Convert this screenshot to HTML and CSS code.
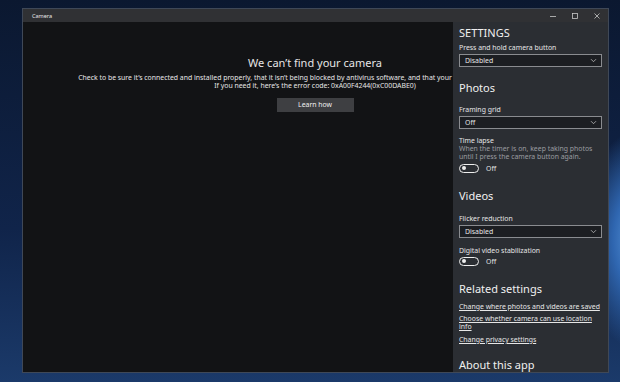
FILE: index.html
```html
<!DOCTYPE html>
<html lang="en">
<head>
    <meta charset="UTF-8">
    <meta name="viewport" content="width=device-width, initial-scale=1.0">
    <title>Camera</title>
    <link rel="stylesheet" href="styles.css">
</head>
<body>
    <div class="desktop">
        <div class="window">
            <div class="titlebar">
                <span class="app-title">Camera</span>
                <div class="controls">
                    <span class="ctl"><svg width="8" height="8" viewBox="0 0 8 8"><path d="M1 4.5h6" stroke="#c8c8c8" stroke-width="0.8"/></svg></span>
                    <span class="ctl"><svg width="8" height="8" viewBox="0 0 8 8"><rect x="1.5" y="1.5" width="5" height="5" fill="none" stroke="#c8c8c8" stroke-width="0.8"/></svg></span>
                    <span class="ctl"><svg width="8" height="8" viewBox="0 0 8 8"><path d="M1.5 1.5l5 5M6.5 1.5l-5 5" stroke="#c8c8c8" stroke-width="0.8"/></svg></span>
                </div>
            </div>
            <div class="content">
                <div class="viewer">
                    <div class="message">
                        <h1>We can’t find your camera</h1>
                        <p>Check to be sure it’s connected and installed properly, that it isn’t being blocked by antivirus software, and that your camera drivers are up-to-date.</p>
                        <p>If you need it, here’s the error code: 0xA00F4244(0xC00DABE0)</p>
                        <button class="learn-btn">Learn how</button>
                    </div>
                </div>

                <div class="settings">
                    <h2 class="top">SETTINGS</h2>
                    <div class="label l-press">Press and hold camera button</div>
                    <div class="dropdown">Disabled<svg class="chev" width="7" height="5" viewBox="0 0 7 5"><path d="M1 1.2l2.5 2.5 2.5-2.5" fill="none" stroke="#bbb" stroke-width="0.8"/></svg></div>

                    <h2 class="h-photos">Photos</h2>
                    <div class="label l-grid">Framing grid</div>
                    <div class="dropdown">Off<svg class="chev" width="7" height="5" viewBox="0 0 7 5"><path d="M1 1.2l2.5 2.5 2.5-2.5" fill="none" stroke="#bbb" stroke-width="0.8"/></svg></div>
                    <div class="label l-lapse">Time lapse</div>
                    <div class="desc">When the timer is on, keep taking photos<br>until I press the camera button again.</div>
                    <div class="toggle-row t-lapse"><span class="toggle"><span class="knob"></span></span>Off</div>

                    <h2 class="h-videos">Videos</h2>
                    <div class="label l-flicker">Flicker reduction</div>
                    <div class="dropdown">Disabled<svg class="chev" width="7" height="5" viewBox="0 0 7 5"><path d="M1 1.2l2.5 2.5 2.5-2.5" fill="none" stroke="#bbb" stroke-width="0.8"/></svg></div>
                    <div class="label l-stab">Digital video stabilization</div>
                    <div class="toggle-row t-stab"><span class="toggle"><span class="knob"></span></span>Off</div>

                    <h2 class="h-related">Related settings</h2>
                    <a class="link l1" href="#">Change where photos and videos are saved</a>
                    <a class="link l2" href="#">Choose whether camera can use location<br>info</a>
                    <a class="link l3" href="#">Change privacy settings</a>

                    <h2 class="h-about">About this app</h2>
                </div>
            </div>
        </div>
    </div>
</body>
</html>
```

FILE: styles.css
```css
html, body {
    margin: 0;
    height: 100%;
}
body {
    font-family: "Noto Sans", "Open Sans", sans-serif;
    background:
        radial-gradient(ellipse 60px 110px at 640px 240px, #5d9be0 0%, #2f66b0 45%, rgba(20, 50, 100, 0) 100%),
        linear-gradient(180deg, #0b1830 0%, #10244a 60%, #1b3a6a 100%);
    overflow: hidden;
}
.desktop {
    width: 620px;
    height: 382px;
    padding: 8px 11px 9px 22px;
    box-sizing: border-box;
}
.window {
    height: 100%;
    display: flex;
    flex-direction: column;
    border: 1px solid #3f4857;
    box-sizing: border-box;
    background: #121315;
}
.titlebar {
    height: 13px;
    background: #303134;
    display: flex;
    align-items: center;
    justify-content: space-between;
    color: #e8e8e8;
    font-size: 5.5px;
    padding-left: 9px;
}
.controls {
    display: flex;
    height: 100%;
}
.ctl {
    width: 22px;
    display: flex;
    align-items: center;
    justify-content: center;
}
.content {
    flex: 1;
    display: flex;
    overflow: hidden;
    background: #121315;
}
/* camera view: clipped where the settings pane begins */
.viewer {
    flex: 1;
    overflow: hidden;
}
.message {
    width: 584px;
    text-align: center;
    color: #e6e6e6;
    white-space: nowrap;
    padding-top: 34px;
}
.message h1 {
    font-size: 11px;
    font-weight: 400;
    line-height: 14px;
    margin: 0 0 4px;
}
.message p {
    font-size: 6.9px;
    line-height: 8px;
    margin: 0;
}
.learn-btn {
    margin-top: 6px;
    width: 77px;
    height: 14px;
    background: #3e3f42;
    border: none;
    color: #f0f0f0;
    font-family: inherit;
    font-size: 6.9px;
    padding: 0;
}
.settings {
    width: 155px;
    flex-shrink: 0;
    background: #2b2e33;
    padding: 4px 6px 0 6px;
    box-sizing: border-box;
    color: #e6e6e6;
    overflow: hidden;
}
.settings h2 {
    font-size: 11px;
    font-weight: 400;
    line-height: 14px;
    margin: 0;
    color: #f0f0f0;
}
.label {
    font-size: 6.9px;
    line-height: 9px;
}
.dropdown {
    margin-top: 2px;
    height: 13px;
    box-sizing: border-box;
    border: 1px solid #8a8c90;
    background: #1c1e22;
    font-size: 6.9px;
    line-height: 11px;
    padding-left: 5px;
    position: relative;
}
.chev {
    position: absolute;
    right: 4px;
    top: 3px;
}
.l-press { margin-top: 3px; }
.h-photos { margin-top: 14px !important; }
.l-grid { margin-top: 10px; }
.l-lapse { margin-top: 8px; line-height: 8px; }
.desc {
    font-size: 6.9px;
    line-height: 8px;
    color: #9a9ca0;
}
.toggle-row {
    display: flex;
    align-items: center;
    height: 9px;
    font-size: 6.9px;
    gap: 7px;
}
.toggle {
    width: 20px;
    height: 9px;
    box-sizing: border-box;
    border: 1.3px solid #eee;
    border-radius: 5px;
    position: relative;
}
.knob {
    position: absolute;
    left: 2px;
    top: 1.2px;
    width: 4px;
    height: 4px;
    border-radius: 50%;
    background: #eee;
}
.t-lapse { margin-top: 3px; }
.h-videos { margin-top: 16px !important; }
.l-flicker { margin-top: 11px; }
.l-stab { margin-top: 8px; }
.t-stab { margin-top: 2px; }
.h-related { margin-top: 16px !important; }
.link {
    display: block;
    color: #e6e6e6;
    font-size: 6.9px;
    line-height: 9px;
    text-decoration: underline;
}
.l1 { margin-top: 6px; }
.l2 { margin-top: 4px; line-height: 8px; }
.l3 { margin-top: 4px; }
.h-about { margin-top: 14px !important; }
```
